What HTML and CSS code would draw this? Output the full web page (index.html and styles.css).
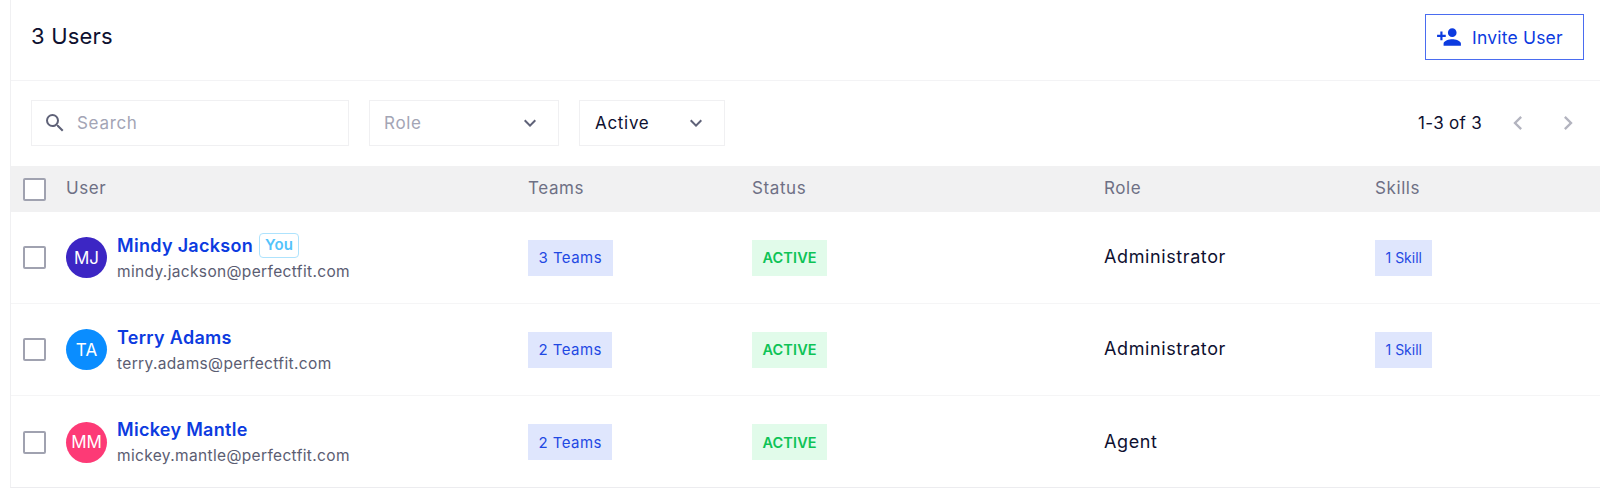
FILE: index.html
```html
<!DOCTYPE html>
<html lang="en">
<head>
<meta charset="utf-8">
<title>Users</title>
<link rel="stylesheet" href="styles.css">
</head>
<body>
<main class="panel">
  <header class="top">
    <h1 class="title">3 Users</h1>
    <button class="invite">
      <svg class="invite-icon" viewBox="0 0 24 24" aria-hidden="true"><path d="M15 12c2.21 0 4-1.79 4-4s-1.79-4-4-4-4 1.79-4 4 1.79 4 4 4zm-9-2V7H4v3H1v2h3v3h2v-3h3v-2H6zm9 4c-2.67 0-8 1.34-8 4v2h16v-2c0-2.66-5.33-4-8-4z"/></svg>
      <span>Invite User</span>
    </button>
  </header>
  <section class="tools">
    <div class="field search">
      <svg class="search-icon" viewBox="0 0 24 24" aria-hidden="true"><path d="M15.5 14h-.79l-.28-.27A6.47 6.47 0 0 0 16 9.5 6.5 6.5 0 1 0 9.5 16c1.61 0 3.09-.59 4.23-1.57l.27.28v.79l5 4.99L20.49 19l-4.99-5zm-6 0C7.01 14 5 11.99 5 9.5S7.01 5 9.5 5 14 7.01 14 9.5 11.99 14 9.5 14z"/></svg>
      <span class="placeholder">Search</span>
    </div>
    <div class="field select role-select">
      <span class="placeholder">Role</span>
      <svg class="chev" viewBox="0 0 24 24" aria-hidden="true"><path d="M7.41 8.59 12 13.17l4.59-4.58L18 10l-6 6-6-6z"/></svg>
    </div>
    <div class="field select active-select">
      <span>Active</span>
      <svg class="chev" viewBox="0 0 24 24" aria-hidden="true"><path d="M7.41 8.59 12 13.17l4.59-4.58L18 10l-6 6-6-6z"/></svg>
    </div>
    <div class="pager">
      <span class="count">1-3 of 3</span>
      <svg class="page-icon" viewBox="0 0 24 24" aria-hidden="true"><path d="M15.41 7.41 14 6l-6 6 6 6 1.41-1.41L10.83 12z"/></svg>
      <svg class="page-icon" viewBox="0 0 24 24" aria-hidden="true"><path d="M10 6 8.59 7.41 13.17 12l-4.58 4.59L10 18l6-6z"/></svg>
    </div>
  </section>
  <div class="row head">
    <span class="box"></span><span class="label">User</span><span class="label">Teams</span><span class="label">Status</span><span class="label">Role</span><span class="label">Skills</span>
  </div>
  <div class="row body">
    <span class="box"></span>
    <div class="user">
      <span class="avatar indigo">MJ</span>
      <div class="who">
        <div class="name-line"><span class="name">Mindy Jackson</span><span class="you">You</span></div>
        <div class="email">mindy.jackson@perfectfit.com</div>
      </div>
    </div>
    <div><span class="tag">3 Teams</span></div>
    <div><span class="status">ACTIVE</span></div>
    <div class="role">Administrator</div>
    <div><span class="tag skill">1 Skill</span></div>
  </div>
  <div class="row body">
    <span class="box"></span>
    <div class="user">
      <span class="avatar blue">TA</span>
      <div class="who">
        <div class="name-line"><span class="name">Terry Adams</span></div>
        <div class="email">terry.adams@perfectfit.com</div>
      </div>
    </div>
    <div><span class="tag">2 Teams</span></div>
    <div><span class="status">ACTIVE</span></div>
    <div class="role">Administrator</div>
    <div><span class="tag skill">1 Skill</span></div>
  </div>
  <div class="row body">
    <span class="box"></span>
    <div class="user">
      <span class="avatar pink">MM</span>
      <div class="who">
        <div class="name-line"><span class="name">Mickey Mantle</span></div>
        <div class="email">mickey.mantle@perfectfit.com</div>
      </div>
    </div>
    <div><span class="tag">2 Teams</span></div>
    <div><span class="status">ACTIVE</span></div>
    <div class="role">Agent</div>
    <div></div>
  </div>
</main>
</body>
</html>
```
FILE: styles.css
```css
* { box-sizing: border-box; }
html, body { margin: 0; height: 100%; background: #fff; overflow: hidden; }
body { font-family: "Inter", "Liberation Sans", sans-serif; color: #0e1030; padding-left: 10px; }
.panel { width: 1590px; height: 488px; border-left: 1px solid #f0f0f2; border-bottom: 1px solid #ececef; }
.top { height: 81px; display: flex; align-items: center; justify-content: space-between; padding: 0 16px 6px 20px; border-bottom: 1px solid #f3f3f5; }
.title { margin: 0 0 2px; font-size: 22px; font-weight: 400; letter-spacing: .2px; }
.invite { width: 159px; height: 46px; display: flex; align-items: center; gap: 10px; padding: 0 0 0 10px; background: #fff; border: 1px solid #4a6cf0; color: #0c3be0; font: inherit; font-size: 17.5px; letter-spacing: .2px; }
.invite-icon { width: 26px; height: 26px; fill: #0c3be0; }
.tools { height: 85px; display: flex; align-items: center; gap: 20px; padding: 0 18px 2px 20px; }
.field { height: 46px; border: 1px solid #f0f0f2; display: flex; align-items: center; font-size: 17px; letter-spacing: .7px; }
.search { width: 318px; padding-left: 11px; gap: 10px; }
.search-icon { width: 24px; height: 24px; fill: #5f6278; }
.placeholder { color: #a3a5b5; }
.select { justify-content: space-between; padding: 0 16px 0 14px; }
.role-select { width: 190px; }
.active-select { width: 146px; }
.active-select span { margin-left: 1px; }
.chev { width: 24px; height: 24px; fill: #5f6278; }
.pager { margin-left: auto; display: flex; align-items: center; font-size: 17px; letter-spacing: .3px; }
.count { margin-right: 22px; }
.page-icon { width: 28px; height: 28px; fill: #b3b4bf; }
.page-icon + .page-icon { margin-left: 22px; }
.row { display: grid; grid-template-columns: 43px 462px 224px 352px 271px 1fr; padding-left: 12px; align-items: center; }
.head { height: 46px; background: #f1f1f2; color: #6e7085; font-size: 17px; letter-spacing: .6px; }
.label { margin-top: -2px; }
.body { height: 92px; border-bottom: 1px solid #f5f5f6; }
.body:last-child { border-bottom: 0; }
.box { width: 23px; height: 23px; border: 2px solid #a0a2b0; border-radius: 2px; background: #fff; }
.user { display: flex; align-items: center; gap: 10px; }
.avatar { width: 41px; height: 41px; border-radius: 50%; display: flex; align-items: center; justify-content: center; color: #fff; font-size: 17px; flex: none; }
.indigo { background: #3c26c4; }
.blue { background: #0a8dff; }
.pink { background: #fd3a76; }
.who { padding-top: 2px; }
.name-line { display: flex; align-items: flex-start; gap: 6px; height: 26px; }
.name { color: #0c3be0; font-size: 18px; font-weight: 600; line-height: 23px; letter-spacing: .3px; }
.you { color: #52c3fb; border: 1px solid #aee3fd; border-radius: 4px; font-size: 15px; font-weight: 600; height: 25px; line-height: 21px; padding: 0 5px; margin-top: -1px; letter-spacing: .2px; }
.email { color: #5b5d72; font-size: 15.5px; line-height: 24px; letter-spacing: .35px; }
.tag { display: inline-flex; align-items: center; height: 36px; padding: 0 10.5px; background: #dfe6fd; color: #1f49e3; font-size: 15px; letter-spacing: .45px; }
.skill { padding: 0 10.5px; font-size: 14px; letter-spacing: 0; }
.status { display: inline-flex; align-items: center; height: 36px; padding: 0 10.5px; background: #e1fbea; color: #0dc356; font-size: 14.5px; font-weight: 600; letter-spacing: .1px; }
.role { font-size: 18px; letter-spacing: .6px; margin-top: -2px; }
```
